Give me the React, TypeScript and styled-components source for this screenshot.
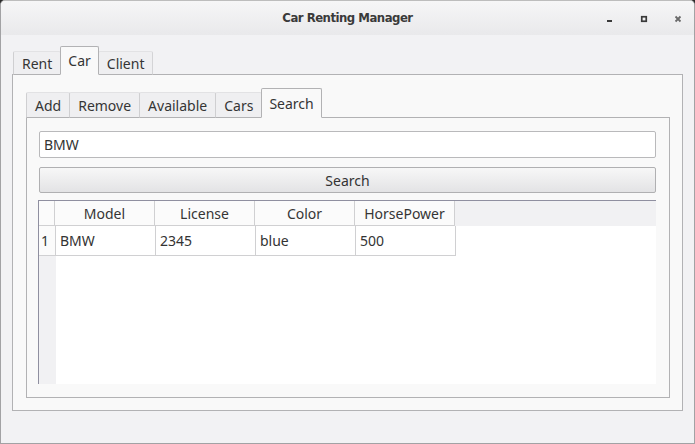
import React from "react";
import styled, { createGlobalStyle } from "styled-components";

const GlobalStyle = createGlobalStyle`
  html, body { margin: 0; padding: 0; background: #2b2b2b; }
  * { box-sizing: border-box; }
  body { font-family: "Noto Sans", "Open Sans", sans-serif; font-size: 14px; color: #353535; }
`;

const Window = styled.div`
  width: 695px;
  height: 444px;
  background: #f2f2f4;
  border: 1px solid #a2a2a4;
  border-top-color: #bdbdbd;
  border-radius: 5px 5px 0 0;
  display: flex;
  flex-direction: column;
  overflow: hidden;
`;

const TitleBar = styled.div`
  height: 34px;
  flex: none;
  display: grid;
  grid-template-columns: 1fr auto 1fr;
  align-items: center;
  background: linear-gradient(#f6f6f7, #e9e9eb);
`;

const Title = styled.div`
  grid-column: 2;
  font-family: "DejaVu Sans Condensed", "Liberation Sans", sans-serif;
  font-weight: bold;
  font-size: 13px;
  color: #3a3a3a;
  letter-spacing: -0.5px;
  padding-bottom: 1px;
`;

const Controls = styled.div`
  grid-column: 3;
  justify-self: end;
  display: flex;
  align-items: center;
  gap: 26px;
  padding-right: 12px;
  padding-top: 2px;
`;

const CtlIcon = styled.svg`
  display: block;
  width: 8px;
  height: 8px;
`;

const Body = styled.div`
  flex: 1;
  padding: 11px 11px 32px 11px;
  display: flex;
  flex-direction: column;
`;

const TabWidget = styled.div`
  flex: 1;
  display: flex;
  flex-direction: column;
`;

const TabBar = styled.div<{ $indent: number }>`
  display: flex;
  align-items: flex-end;
  padding-left: ${(p) => p.$indent}px;
  position: relative;
  z-index: 1;
`;

const Tab = styled.div<{ $active?: boolean; $h: number; $drop: number }>`
  height: ${(p) => (p.$active ? p.$h : p.$h - p.$drop)}px;
  padding: 0 ${(p) => (p.$active ? 7 : 8)}px;
  padding-top: ${(p) => (p.$active ? 0 : 1)}px;
  display: flex;
  align-items: center;
  justify-content: center;
  margin-bottom: -1px;
  margin-left: -1px;
  &:first-child { margin-left: 0; }
  color: #353535;
  white-space: nowrap;
  background: ${(p) => (p.$active ? "#f9f9f9" : "#efeff1")};
  border: 1px solid ${(p) => (p.$active ? "#b2b2b4" : "#d4d4d6")};
  border-bottom: ${(p) => (p.$active ? "1px solid #f9f9f9" : "1px solid #b2b2b4")};
  border-left-color: ${(p) => (p.$active ? "#b2b2b4" : "#cfcfd1")};
  border-top-color: ${(p) => (p.$active ? "#b2b2b4" : "#e2e2e4")};
  border-radius: 2px 2px 0 0;
  position: relative;
  z-index: ${(p) => (p.$active ? 2 : 1)};
`;

const Pane = styled.div<{ $pad: string }>`
  flex: 1;
  background: #f9f9f9;
  border: 1px solid #b2b2b4;
  padding: ${(p) => p.$pad};
  display: flex;
  flex-direction: column;
`;

const LineEdit = styled.div`
  height: 27px;
  margin-left: 1px;
  background: #ffffff;
  border: 1px solid #b9b9bb;
  border-radius: 2px;
  display: flex;
  align-items: center;
  padding-left: 4px;
  color: #333;
`;

const Button = styled.div`
  height: 26px;
  margin-top: 9px;
  margin-left: 1px;
  border: 1px solid #b0b0b2;
  border-radius: 2px;
  background: linear-gradient(#f7f7f7, #e3e3e5);
  display: flex;
  align-items: center;
  justify-content: center;
  color: #333;
`;

const Table = styled.div`
  flex: 1;
  margin-top: 7px;
  border-top: 1px solid #8f8fa0;
  border-left: 1px solid #8f8fa0;
  display: flex;
  flex-direction: column;
  background: #ffffff;
`;

const HeaderRow = styled.div`
  display: flex;
  height: 25px;
  flex: none;
`;

const Corner = styled.div`
  width: 16px;
  background: #fbfbfb;
  border-right: 1px solid #d0d0d2;
  border-bottom: 1px solid #d0d0d2;
`;

const HeaderCell = styled.div`
  width: 100px;
  background: #fbfbfb;
  border-right: 1px solid #d0d0d2;
  border-bottom: 1px solid #d0d0d2;
  display: flex;
  align-items: center;
  justify-content: center;
  color: #353535;
`;

const HeaderFiller = styled.div`
  flex: 1;
  background: #f1f1f3;
`;

const BodyArea = styled.div`
  flex: 1;
  display: flex;
`;

const VHeader = styled.div`
  width: 17px;
  background: #f1f1f3;
  display: flex;
  flex-direction: column;
`;

const VHeaderCell = styled.div`
  height: 30px;
  background: #fbfbfb;
  border-right: 1px solid #d0d0d2;
  border-bottom: 1px solid #d0d0d2;
  display: flex;
  align-items: center;
  padding-left: 2px;
`;

const Cells = styled.div`
  flex: 1;
  display: flex;
  flex-direction: column;
  align-items: flex-start;
`;

const Row = styled.div`
  display: flex;
  height: 30px;
`;

const Cell = styled.div`
  width: 100px;
  border-right: 1px solid #d0d0d2;
  border-bottom: 1px solid #d0d0d2;
  display: flex;
  align-items: center;
  padding-left: 4px;
  color: #333;
`;

const outerTabs = ["Rent", "Car", "Client"];
const innerTabs = ["Add", "Remove", "Available", "Cars", "Search"];
const headers = ["Model", "License", "Color", "HorsePower"];
const rows = [["BMW", "2345", "blue", "500"]];

export default function App() {
  return (
    <>
      <GlobalStyle />
      <Window>
        <TitleBar>
          <Title>Car Renting Manager</Title>
          <Controls>
            <CtlIcon viewBox="0 0 8 8">
              <rect x="1" y="5" width="5" height="2" fill="#3a3a3a" />
            </CtlIcon>
            <CtlIcon viewBox="0 0 8 8">
              <rect x="1.75" y="1.75" width="4.5" height="4.5" fill="none" stroke="#3a3a3a" strokeWidth="1.7" />
            </CtlIcon>
            <CtlIcon viewBox="0 0 8 8">
              <path d="M1.5 1.5 L6.5 6.5 M6.5 1.5 L1.5 6.5" stroke="#6a6a6a" strokeWidth="1.8" />
            </CtlIcon>
          </Controls>
        </TitleBar>
        <Body>
          <TabWidget>
            <TabBar $indent={1}>
              {outerTabs.map((t) => (
                <Tab key={t} $h={29} $drop={5} $active={t === "Car"}>
                  {t}
                </Tab>
              ))}
            </TabBar>
            <Pane $pad="13px 12px 12px 13px">
              <TabWidget>
                <TabBar $indent={0}>
                  {innerTabs.map((t) => (
                    <Tab key={t} $h={30} $drop={4} $active={t === "Search"}>
                      {t}
                    </Tab>
                  ))}
                </TabBar>
                <Pane $pad="13px 13px 13px 11px">
                  <LineEdit>BMW</LineEdit>
                  <Button>Search</Button>
                  <Table>
                    <HeaderRow>
                      <Corner />
                      {headers.map((h) => (
                        <HeaderCell key={h}>{h}</HeaderCell>
                      ))}
                      <HeaderFiller />
                    </HeaderRow>
                    <BodyArea>
                      <VHeader>
                        {rows.map((_, i) => (
                          <VHeaderCell key={i}>{i + 1}</VHeaderCell>
                        ))}
                      </VHeader>
                      <Cells>
                        {rows.map((r, i) => (
                          <Row key={i}>
                            {r.map((c, j) => (
                              <Cell key={j}>{c}</Cell>
                            ))}
                          </Row>
                        ))}
                      </Cells>
                    </BodyArea>
                  </Table>
                </Pane>
              </TabWidget>
            </Pane>
          </TabWidget>
        </Body>
      </Window>
    </>
  );
}
